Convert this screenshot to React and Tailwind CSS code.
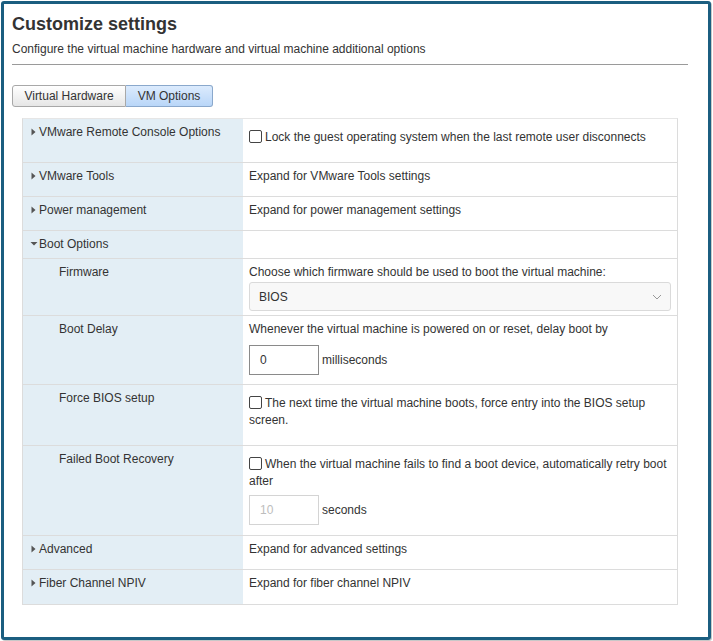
import React from "react";

const font = { fontFamily: '"Liberation Sans", Arial, sans-serif' };

function Caret({ open }) {
  return open ? (
    <svg width="8" height="6" viewBox="0 0 8 6" className="ml-[-1px] mr-[1px] shrink-0">
      <path d="M0.5 1 L7.5 1 L4 4.5 Z" fill="#555" />
    </svg>
  ) : (
    <svg width="5" height="8" viewBox="0 0 5 8" className="mr-[3px] shrink-0">
      <path d="M0.5 0.5 L4.5 4 L0.5 7.5 Z" fill="#555" />
    </svg>
  );
}

function Checkbox() {
  return (
    <span className="inline-block w-[13px] h-[13px] border border-[#444] rounded-[2px] bg-white mr-[3px] align-[-2px]" />
  );
}

function Row({ label, caret, open, sub, children, checkRow, last }) {
  return (
    <div className={`flex ${last ? "" : "border-b border-[#dcdcdc]"}`}>
      <div className="w-[220px] shrink-0 bg-[#e3eef5] pt-[6px] pb-[7px] leading-[14px]">
        <div className={`flex items-center ${sub ? "pl-[36px]" : "pl-[8px]"}`}>
          {caret && <Caret open={open} />}
          <span>{label}</span>
        </div>
      </div>
      <div
        className={`flex-1 px-[6px] ${
          checkRow ? "pt-[10px] leading-[17px]" : "pt-[6px] leading-[14px]"
        }`}
      >
        {children}
      </div>
    </div>
  );
}

function NumberBox({ value, disabled }) {
  return (
    <div
      className={`w-[70px] h-[30px] flex items-center pl-[10px] border ${
        disabled ? "border-[#d4d4d4] text-[#bdbdbd]" : "border-[#8a8a8a] text-[#333]"
      } bg-white`}
    >
      {value}
    </div>
  );
}

export default function App() {
  return (
    <div className="w-[713px] h-[641px] bg-white pl-[1px] pt-[1px]" style={font}>
      <div className="w-[710px] h-[639px] border-[3px] border-[#1b5e80] rounded-[3px] shadow-[1px_1px_0_#c8c8c8] text-[12px] text-[#333]">
        <div className="pl-[8px] pr-[20px] pt-[10px]">
          <h1 className="text-[18px] leading-[20px] font-bold text-[#333]">Customize settings</h1>
          <p className="mt-[8px] leading-[14px]">
            Configure the virtual machine hardware and virtual machine additional options
          </p>
          <div className="mt-[8px] h-[1px] bg-[#9a9a9a]" />

          <div className="mt-[20px] flex h-[22px]">
            <div className="w-[114px] flex items-center justify-center border border-[#a8a8a8] rounded-l-[3px] bg-gradient-to-b from-white to-[#e6e6e6]">
              Virtual Hardware
            </div>
            <div className="w-[87px] flex items-center justify-center border border-l-0 border-[#8aa8cc] rounded-r-[3px] bg-gradient-to-b from-[#dcebfd] to-[#b9d6f8]">
              VM Options
            </div>
          </div>

          <div className="mt-[11px] mx-[10px] border border-[#dcdcdc] border-t-[#e6e6e6]">
            <Row label="VMware Remote Console Options" caret checkRow>
              <div className="pb-[16px]">
                <Checkbox />
                Lock the guest operating system when the last remote user disconnects
              </div>
            </Row>
            <Row label="VMware Tools" caret>
              <div className="pb-[13px]">Expand for VMware Tools settings</div>
            </Row>
            <Row label="Power management" caret>
              <div className="pb-[13px]">Expand for power management settings</div>
            </Row>
            <Row label="Boot Options" caret open>
              <div />
            </Row>
            <Row label="Firmware" sub>
              <div>Choose which firmware should be used to boot the virtual machine:</div>
              <div className="mt-[3px] mb-[4px] h-[29px] flex items-center justify-between pl-[9px] pr-[8px] bg-[#f8f8f8] border border-[#dadada] rounded-[3px]">
                <span>BIOS</span>
                <svg width="10" height="6" viewBox="0 0 10 6">
                  <path d="M1 1 L5 5 L9 1" fill="none" stroke="#999" strokeWidth="1" />
                </svg>
              </div>
            </Row>
            <Row label="Boot Delay" sub>
              <div>Whenever the virtual machine is powered on or reset, delay boot by</div>
              <div className="mt-[9px] mb-[9px] flex items-center">
                <NumberBox value="0" />
                <span className="ml-[3px]">milliseconds</span>
              </div>
            </Row>
            <Row label="Force BIOS setup" sub checkRow>
              <div className="pb-[16px]">
                <Checkbox />
                The next time the virtual machine boots, force entry into the BIOS setup screen.
              </div>
            </Row>
            <Row label="Failed Boot Recovery" sub checkRow>
              <div>
                <Checkbox />
                When the virtual machine fails to find a boot device, automatically retry boot after
              </div>
              <div className="mt-[5px] mb-[10px] flex items-center">
                <NumberBox value="10" disabled />
                <span className="ml-[3px]">seconds</span>
              </div>
            </Row>
            <Row label="Advanced" caret>
              <div className="pb-[13px]">Expand for advanced settings</div>
            </Row>
            <Row label="Fiber Channel NPIV" caret last>
              <div className="pb-[14px]">Expand for fiber channel NPIV</div>
            </Row>
          </div>
        </div>
      </div>
    </div>
  );
}
